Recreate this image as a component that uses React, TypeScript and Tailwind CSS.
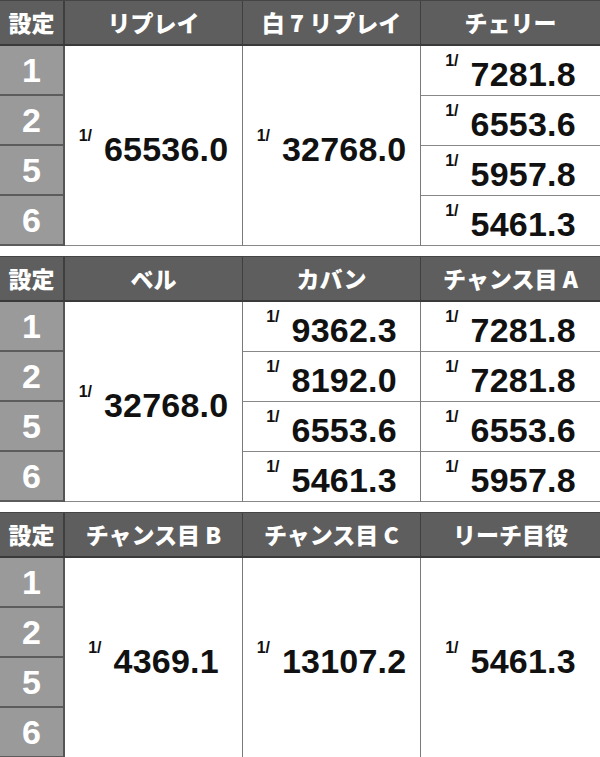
type Col = string | string[];

interface TableProps {
  headers: string[];
  cols: Col[];
}

const widths = ['w-[178px]', 'w-[178px]', 'w-[179px]'];
const settings = ['1', '2', '5', '6'];

function Value({ v }: { v: string }) {
  return (
    <div className="flex items-start justify-center pt-[2px] font-['Liberation_Sans',Arial,sans-serif] font-bold text-[#111]">
      <span className="text-[16px] leading-none">1/</span>
      <span className="ml-[12px] mt-[4px] text-[34px] leading-none tracking-[0.2px]">{v}</span>
    </div>
  );
}

function Table({ headers, cols }: TableProps) {
  return (
    <div className="flex flex-col">
      <div className="flex h-[46px] border-t border-[#444] border-b-2 border-b-[#3a3a3a] bg-[#5e5e5e] font-['Noto_Sans_CJK_JP',sans-serif] text-[23px] font-black text-white">
        <div className="flex w-[65px] items-center justify-center border-r-2 border-[#3f3f3f]">設定</div>
        {headers.map((h, i) => (
          <div
            key={h}
            className={`flex ${widths[i]} items-center justify-center ${i < 2 ? 'border-r border-[#3f3f3f]' : ''}`}
          >
            {h}
          </div>
        ))}
      </div>
      <div className="flex h-[200px]">
        <div className="flex w-[65px] flex-col border-r-2 border-[#555]">
          {settings.map((s) => (
            <div
              key={s}
              className="flex h-[50px] items-center justify-center border-b-2 border-[#5c5c5c] bg-[#9a9a9a] font-['Liberation_Sans',Arial,sans-serif] text-[34px] font-bold leading-none text-white"
            >
              {s}
            </div>
          ))}
        </div>
        {cols.map((c, i) => (
          <div
            key={i}
            className={`flex ${widths[i]} flex-col bg-white ${i < 2 ? 'border-r border-[#7a7a7a]' : ''}`}
          >
            {typeof c === 'string' ? (
              <div className="flex h-[200px] items-center justify-center border-b border-[#888]">
                <Value v={c} />
              </div>
            ) : (
              c.map((v, j) => (
                <div key={j} className="flex h-[50px] items-center justify-center border-b border-[#888]">
                  <Value v={v} />
                </div>
              ))
            )}
          </div>
        ))}
      </div>
    </div>
  );
}

export default function App() {
  return (
    <div className="flex w-[600px] flex-col gap-[10px] bg-white">
      <Table
        headers={['リプレイ', '白 7 リプレイ', 'チェリー']}
        cols={['65536.0', '32768.0', ['7281.8', '6553.6', '5957.8', '5461.3']]}
      />
      <Table
        headers={['ベル', 'カバン', 'チャンス目 A']}
        cols={['32768.0', ['9362.3', '8192.0', '6553.6', '5461.3'], ['7281.8', '7281.8', '6553.6', '5957.8']]}
      />
      <Table
        headers={['チャンス目 B', 'チャンス目 C', 'リーチ目役']}
        cols={['4369.1', '13107.2', '5461.3']}
      />
    </div>
  );
}
